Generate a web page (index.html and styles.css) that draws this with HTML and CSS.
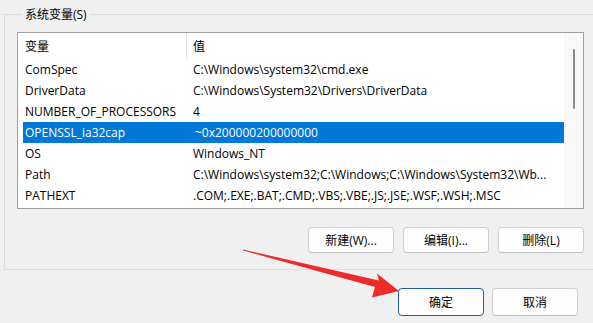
FILE: index.html
```html
<!DOCTYPE html>
<html lang="zh-CN">
<head>
<meta charset="utf-8">
<title>系统变量</title>
<link rel="stylesheet" href="styles.css">
</head>
<body>
<div class="page">
  <fieldset class="group">
    <legend class="legend">系统变量(S)</legend>
    <div class="inner">
      <div class="list">
        <div class="rows">
          <div class="head">
            <div class="c1">变量</div>
            <div class="div"></div>
            <div class="c2">值</div>
          </div>
          <div class="row"><div class="c1">ComSpec</div><div class="c2">C:\Windows\system32\cmd.exe</div></div>
          <div class="row"><div class="c1">DriverData</div><div class="c2">C:\Windows\System32\Drivers\DriverData</div></div>
          <div class="row"><div class="c1">NUMBER_OF_PROCESSORS</div><div class="c2">4</div></div>
          <div class="row sel"><div class="c1">OPENSSL_ia32cap</div><div class="c2 shift">~0x200000200000000</div></div>
          <div class="row"><div class="c1">OS</div><div class="c2">Windows_NT</div></div>
          <div class="row"><div class="c1">Path</div><div class="c2">C:\Windows\system32;C:\Windows;C:\Windows\System32\Wb...</div></div>
          <div class="row"><div class="c1">PATHEXT</div><div class="c2">.COM;.EXE;.BAT;.CMD;.VBS;.VBE;.JS;.JSE;.WSF;.WSH;.MSC</div></div>
        </div>
        <div class="scroll"><div class="thumb"></div></div>
      </div>
      <div class="btnrow">
        <button class="btn">新建(W)...</button>
        <button class="btn">编辑(I)...</button>
        <button class="btn">删除(L)</button>
      </div>
    </div>
  </fieldset>
  <div class="footer">
    <button class="btn big default">确定</button>
    <button class="btn big">取消</button>
  </div>
  <svg class="arrow" width="593" height="323" viewBox="0 0 593 323">
    <polygon points="243,249.5 379,280.5 377,273.5 399,291 372,297.5 375,287 243,250.5" fill="#ee2b2b"/>
  </svg>
</div>
</body>
</html>
```

FILE: styles.css
```css
* { box-sizing: border-box; }
html, body { margin: 0; padding: 0; }
body {
  background: #f0f0f0;
  font-family: "Open Sans", "Noto Sans CJK SC", sans-serif;
  font-size: 12px;
  color: #000;
}
.page {
  position: relative;
  width: 593px;
  height: 323px;
  overflow: hidden;
}
.group {
  margin: 6px 0 0 4px;
  width: 620px;
  border: 1px solid #dcdcdc;
  padding: 9px 0 16px 12px;
  min-width: 0;
}
.legend {
  padding: 0 3px;
  margin-left: 5px;
  line-height: 17px;
  height: 17px;
}
.inner {
  width: 567px;
}
.list {
  height: 177px;
  border: 1px solid #a0a0a0;
  background: #fff;
  display: flex;
  padding-left: 5px;
}
.rows {
  width: 541px;
  display: flex;
  flex-direction: column;
}
.head {
  height: 26px;
  display: flex;
  align-items: center;
}
.head .div {
  width: 1px;
  height: 26px;
  background: #e5e5e5;
}
.c1 {
  width: 163px;
  padding-left: 2px;
  white-space: nowrap;
}
.c2 {
  padding-left: 6px;
  white-space: nowrap;
  overflow: hidden;
  flex: 1;
}
.row .c1 { width: 164px; }
.row .c2 { padding-left: 6px; }
.row .c2.shift { padding-left: 8px; }
.row {
  height: 21px;
  display: flex;
  align-items: center;
}
.row.sel {
  background: #0078d7;
  color: #fff;
}
.scroll {
  width: 19px;
  background: #f8f8f8;
  display: flex;
  justify-content: center;
  padding-top: 16px;
}
.thumb {
  width: 2px;
  height: 60px;
  background: #8a8a8a;
  border-radius: 1px;
}
.btnrow {
  display: flex;
  justify-content: flex-end;
  gap: 9px;
  margin-top: 18px;
}
.btn {
  font: inherit;
  color: #000;
  width: 86px;
  height: 26px;
  border: 1px solid #d0d0d0;
  border-bottom-color: #c0c0c0;
  border-radius: 4px;
  background: #fdfdfd;
  padding: 0;
}
.footer {
  display: flex;
  justify-content: flex-end;
  gap: 8px;
  padding: 18px 15px 0 0;
}
.btn.big { height: 28px; }
.btn.default {
  border: 1px solid #1f5f9f;
}
.arrow {
  position: absolute;
  left: 0;
  top: 0;
  pointer-events: none;
}
```
